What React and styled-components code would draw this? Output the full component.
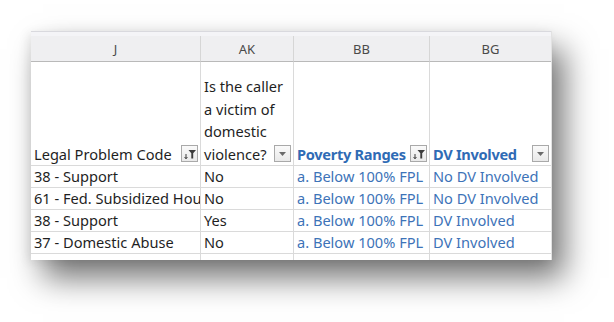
import React from "react";
import styled, { createGlobalStyle } from "styled-components";

const GlobalStyle = createGlobalStyle`
  html, body {
    margin: 0;
    padding: 0;
    background: #ffffff;
  }
  body {
    font-family: "Noto Sans", "Liberation Sans", sans-serif;
  }
`;

const Page = styled.div`
  width: 614px;
  height: 322px;
  padding: 31px 0 0 31px;
  box-sizing: border-box;
  overflow: hidden;
`;

const Sheet = styled.div`
  width: 521px;
  height: 229px;
  overflow: hidden;
  background: #ffffff;
  border-right: 1px solid #e2e2e2;
  box-sizing: border-box;
  box-shadow: 12px 18px 30px rgba(0, 0, 0, 0.55), -3px 2px 10px rgba(0, 0, 0, 0.08);
`;

const TopStrip = styled.div`
  height: 5px;
  background: #f4f4f7;
  border-top: 1px solid #d9d9de;
  box-sizing: border-box;
`;

const Grid = styled.div`
  display: grid;
  grid-template-columns: 170px 93px 136px 122px;
`;

const ColHead = styled.div`
  height: 26px;
  background: #efeff1;
  border-bottom: 1px solid #b9b9b9;
  border-right: 1px solid ${(p) => (p.$last ? "transparent" : "#d6d6d6")};
  box-sizing: border-box;
  display: flex;
  align-items: center;
  justify-content: center;
  font-size: 13px;
  color: #4a4a4a;
`;

const Cell = styled.div`
  position: relative;
  height: ${(p) => p.$h || 22}px;
  border-right: 1px solid #dadada;
  border-bottom: 1px solid #dadada;
  box-sizing: border-box;
  padding: 0 2px 0 3px;
  font-size: 14.6px;
  line-height: 22px;
  color: ${(p) => (p.$blue ? "#3d73b8" : "#1f1f1f")};
  white-space: nowrap;
  overflow: hidden;
  display: flex;
  align-items: flex-end;
`;

const HeadCell = styled(Cell)`
  white-space: normal;
  font-weight: ${(p) => (p.$bold ? 700 : 400)};
  letter-spacing: ${(p) => (p.$bold ? "-0.3px" : "0")};
  color: ${(p) => (p.$bold ? "#2f6bb5" : "#1f1f1f")};
  line-height: 22.5px;
`;

const HeadText = styled.span`
  display: block;
  width: 100%;
`;

const FilterBtn = styled.div`
  position: absolute;
  right: 2px;
  bottom: 3px;
  width: 17px;
  height: 17px;
  box-sizing: border-box;
  border: 1px solid #a9a9a9;
  background: linear-gradient(#fafafa, #e9e9e9);
  display: flex;
  align-items: center;
  justify-content: center;
`;

function FilterIcon({ active }) {
  return (
    <FilterBtn>
      {active ? (
        <svg width="15" height="15" viewBox="0 0 15 15">
          <path d="M6.5 4h7.5L11.2 7.2V12.5H9.3V7.2Z" fill="#3c3c3c" />
          <path d="M4 8v4.5" stroke="#3c3c3c" strokeWidth="1" />
          <path d="M2.6 11l1.4 1.8 1.4-1.8" fill="none" stroke="#3c3c3c" strokeWidth="1" />
        </svg>
      ) : (
        <svg width="9" height="6" viewBox="0 0 9 6">
          <path d="M1 1h7L4.5 5Z" fill="#6a6a6a" />
        </svg>
      )}
    </FilterBtn>
  );
}

const rows = [
  ["38 - Support", "No", "a. Below 100% FPL", "No DV Involved"],
  ["61 - Fed. Subsidized Housing", "No", "a. Below 100% FPL", "No DV Involved"],
  ["38 - Support", "Yes", "a. Below 100% FPL", "DV Involved"],
  ["37 - Domestic Abuse", "No", "a. Below 100% FPL", "DV Involved"],
  ["", "", "", ""],
];

export default function App() {
  return (
    <Page>
      <GlobalStyle />
      <Sheet>
        <TopStrip />
        <Grid>
          <ColHead>J</ColHead>
          <ColHead>AK</ColHead>
          <ColHead>BB</ColHead>
          <ColHead $last>BG</ColHead>

          <HeadCell $h={104}>
            <HeadText>Legal Problem Code</HeadText>
            <FilterIcon active />
          </HeadCell>
          <HeadCell $h={104}>
            <HeadText>Is the caller a victim of domestic violence?</HeadText>
            <FilterIcon />
          </HeadCell>
          <HeadCell $h={104} $bold>
            <HeadText>Poverty Ranges</HeadText>
            <FilterIcon active />
          </HeadCell>
          <HeadCell $h={104} $bold>
            <HeadText>DV Involved</HeadText>
            <FilterIcon />
          </HeadCell>

          {rows.map((r, i) =>
            r.map((v, j) => (
              <Cell key={`${i}-${j}`} $blue={j >= 2}>
                {v}
              </Cell>
            ))
          )}
        </Grid>
      </Sheet>
    </Page>
  );
}
